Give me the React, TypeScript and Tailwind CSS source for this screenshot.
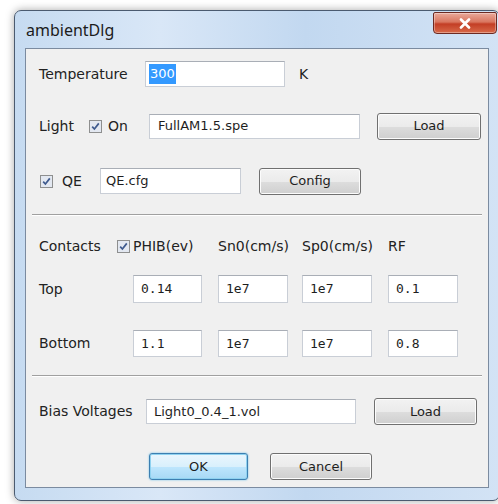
import React from "react";

const ui = { fontFamily: '"DejaVu Sans", Verdana, sans-serif' };
const mono = { fontFamily: '"DejaVu Sans Mono", monospace' };

function CheckBox() {
  return (
    <span className="inline-flex h-[13px] w-[13px] shrink-0 items-center justify-center border border-[#8e8f8f] bg-[linear-gradient(135deg,#dcdcdc,#f8f8f8)]">
      <svg width="11" height="11" viewBox="0 0 11 11">
        <rect x="0" y="0" width="11" height="11" fill="#e3e8f1" />
        <path
          d="M2.2 5.6 L4.4 8 L8.8 2.4"
          fill="none"
          stroke="#3e5a8e"
          strokeWidth="1.7"
        />
      </svg>
    </span>
  );
}

function Field({
  value,
  width,
  height = 26,
  isMono = false,
  pad = 6,
}: {
  value: string;
  width: number;
  height?: number;
  isMono?: boolean;
  pad?: number;
}) {
  return (
    <div
      className="flex shrink-0 items-center border border-[#c9ced6] border-t-[#a9aeb6] bg-white text-[13px] text-[#1e1e1e]"
      style={{ width, height, paddingLeft: pad, ...(isMono ? mono : ui) }}
    >
      {value}
    </div>
  );
}

function Button({
  label,
  width,
  primary = false,
}: {
  label: string;
  width: number;
  primary?: boolean;
}) {
  return (
    <div
      className={
        primary
          ? "flex h-[27px] shrink-0 items-center justify-center rounded-[3px] border border-[#3c7fb1] bg-[linear-gradient(#eaf6fd_0%,#d9f0fc_50%,#bee6fd_51%,#a7d9f5_100%)] text-[13px] text-[#1e1e1e] shadow-[inset_0_0_0_1px_#8fd2f0,0_0_2px_#5fbbe8]"
          : "flex h-[27px] shrink-0 items-center justify-center rounded-[3px] border border-[#707070] bg-[linear-gradient(#f2f2f2_0%,#ebebeb_50%,#dddddd_51%,#cfcfcf_100%)] text-[13px] text-[#1e1e1e] shadow-[inset_0_0_0_1px_#fcfcfc]"
      }
      style={{ width, ...ui }}
    >
      {label}
    </div>
  );
}

function Separator() {
  return (
    <div className="mx-[6px] flex flex-col">
      <div className="h-px bg-[#a0a0a0]" />
      <div className="h-px bg-white" />
    </div>
  );
}

export default function App() {
  return (
    <div className="h-[504px] w-[498px] overflow-hidden bg-white pl-[14px] pt-[10px]">
      <div className="flex h-[491px] w-[486px] flex-col rounded-[7px] border border-[#4b5b70] bg-[linear-gradient(90deg,#c6dbf1_0%,#d9e7f7_30%,#c2d8f0_60%,#d3e3f5_100%)] shadow-[0_0_8px_rgba(0,0,0,0.35)]">
        {/* title bar */}
        <div className="flex h-[37px] items-start justify-between">
          <span
            className="pl-[11px] pt-[9px] text-[16px] leading-[20px] text-[#1c1c1c]"
            style={{ fontFamily: '"Noto Sans", "Open Sans", sans-serif' }}
          >
            ambientDlg
          </span>
          <div className="mr-[2px] mt-[1px] flex h-[22px] w-[64px] items-center justify-center rounded-b-[4px] rounded-t-[2px] border border-[#6d2a22] bg-[linear-gradient(#e9a99b_0%,#d9765f_45%,#c33e25_55%,#d86a4a_100%)] shadow-[inset_0_0_0_1px_rgba(255,255,255,0.35)]">
            <svg width="12" height="11" viewBox="0 0 12 11">
              <path
                d="M2 1.5 L10 9.5 M10 1.5 L2 9.5"
                stroke="#ffffff"
                strokeWidth="2.6"
                strokeLinecap="round"
              />
            </svg>
          </div>
        </div>

        {/* client area */}
        <div className="ml-[10px] mr-[10px] flex h-[440px] flex-col border border-[#7b8ba0] bg-[#f0f0f0] text-[14px] text-[#222]" style={ui}>
          <div className="mt-[12px] flex h-[26px] items-center pl-[13px]">
            <span className="w-[106px]">Temperature</span>
            <div className="flex h-[26px] w-[140px] items-center border border-[#c9ced6] border-t-[#a9aeb6] bg-white pl-[3px] text-[13px]">
              <span className="bg-[#3399ff] px-px text-white">300</span>
            </div>
            <span className="ml-[14px]">K</span>
          </div>

          <div className="mt-[25px] flex h-[28px] items-center pl-[13px]">
            <span className="w-[50px]">Light</span>
            <div className="flex w-[60px] items-center gap-[6px]">
              <CheckBox />
              <span>On</span>
            </div>
            <Field value="FullAM1.5.spe" width={211} height={25} pad={8} />
            <div className="ml-[17px]">
              <Button label="Load" width={104} />
            </div>
          </div>

          <div className="mt-[27px] flex h-[28px] items-center pl-[14px]">
            <div className="flex w-[60px] items-center gap-[9px]">
              <CheckBox />
              <span>QE</span>
            </div>
            <Field value="QE.cfg" width={141} pad={5} />
            <div className="ml-[18px]">
              <Button label="Config" width={102} />
            </div>
          </div>

          <div className="mt-[19px]">
            <Separator />
          </div>

          <div className="mt-[20px] grid h-[20px] grid-cols-[94px_85px_84px_86px_70px] items-center pl-[13px]">
            <div className="flex items-center justify-between pr-[3px]">
              <span>Contacts</span>
              <CheckBox />
            </div>
            <span>PHIB(ev)</span>
            <span>Sn0(cm/s)</span>
            <span>Sp0(cm/s)</span>
            <span>RF</span>
          </div>

          <div className="mt-[19px] grid h-[28px] grid-cols-[94px_85px_84px_86px_70px] items-center pl-[13px]">
            <span>Top</span>
            <Field value="0.14" width={69} height={28} isMono pad={7} />
            <Field value="1e7" width={70} height={28} isMono pad={7} />
            <Field value="1e7" width={70} height={28} isMono pad={7} />
            <Field value="0.1" width={70} height={28} isMono pad={7} />
          </div>

          <div className="mt-[27px] grid h-[27px] grid-cols-[94px_85px_84px_86px_70px] items-center pl-[13px]">
            <span>Bottom</span>
            <Field value="1.1" width={69} height={27} isMono pad={7} />
            <Field value="1e7" width={70} height={27} isMono pad={7} />
            <Field value="1e7" width={70} height={27} isMono pad={7} />
            <Field value="0.8" width={70} height={27} isMono pad={7} />
          </div>

          <div className="mt-[18px]">
            <Separator />
          </div>

          <div className="mt-[21px] flex h-[27px] items-center pl-[13px]">
            <span className="w-[107px]">Bias Voltages</span>
            <Field value="Light0_0.4_1.vol" width={210} height={25} pad={7} />
            <div className="ml-[18px]">
              <Button label="Load" width={103} />
            </div>
          </div>

          <div className="mt-[28px] flex h-[27px] items-center pl-[123px]">
            <Button label="OK" width={99} primary />
            <div className="ml-[22px]">
              <Button label="Cancel" width={102} />
            </div>
          </div>
        </div>
      </div>
    </div>
  );
}
